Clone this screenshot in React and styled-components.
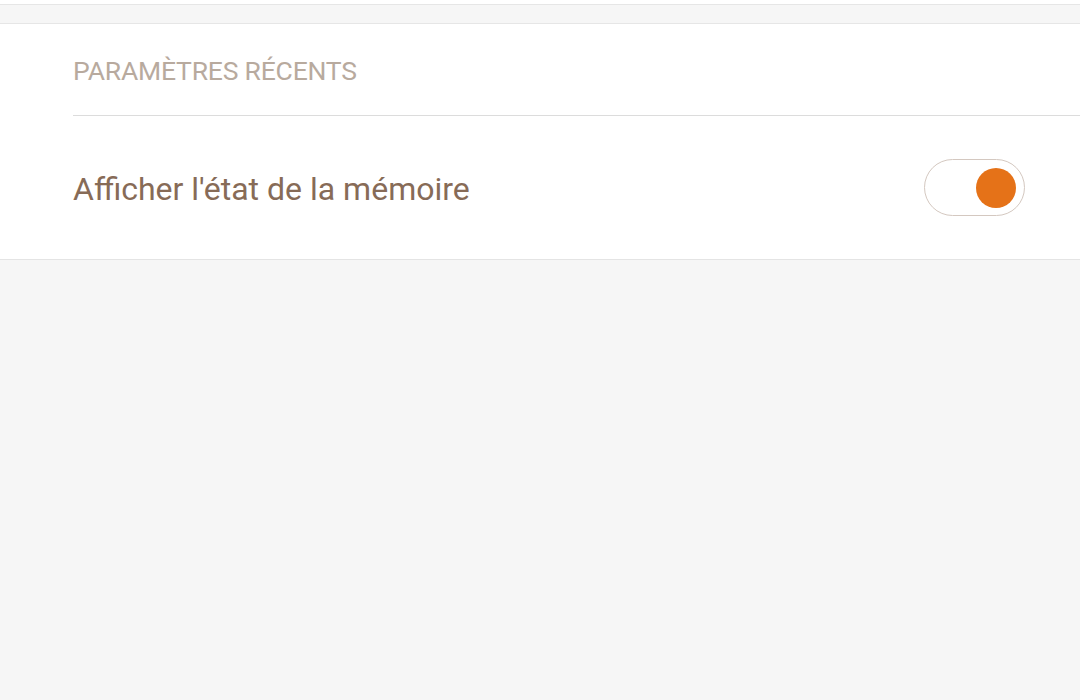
import React, { useState } from 'react';
import styled, { createGlobalStyle } from 'styled-components';

const GlobalStyle = createGlobalStyle`
	html, body {
		margin: 0;
		padding: 0;
		background: #f6f6f6;
		font-family: Roboto, "Liberation Sans", sans-serif;
	}
`;

const Page = styled.div`
	width: 1080px;
	height: 700px;
	background: #f6f6f6;
	overflow: hidden;
`;

const TopGap = styled.div`
	height: 4px;
	background: #ffffff;
	border-bottom: 1px solid #e6e6e6;
`;

const Strip = styled.div`
	height: 18px;
	background: #f6f6f6;
	border-bottom: 1px solid #e6e6e6;
`;

const Panel = styled.section`
	background: #ffffff;
	border-bottom: 1px solid #e4e4e4;
	padding-left: 73px;
`;

const SectionTitle = styled.div`
	height: 92px;
	display: flex;
	align-items: center;
	padding-top: 1px;
	box-sizing: border-box;
	border-bottom: 1px solid #dcdcdc;
	color: #b8aa9e;
	font-size: 26.5px;
	letter-spacing: -0.2px;
`;

const Row = styled.div`
	height: 143px;
	display: flex;
	align-items: center;
	justify-content: space-between;
	padding-right: 55px;
`;

const Label = styled.span`
	color: #876b57;
	font-size: 32px;
	letter-spacing: 0;
	margin-top: 2px;
`;

const Switch = styled.button`
	width: 101px;
	height: 57px;
	padding: 0 8px;
	border: 1px solid #d4c8c0;
	border-radius: 29px;
	background: #ffffff;
	display: flex;
	align-items: center;
	justify-content: ${(p) => (p.$on ? 'flex-end' : 'flex-start')};
	cursor: pointer;
	box-sizing: border-box;
`;

const Knob = styled.span`
	width: 40px;
	height: 40px;
	border-radius: 50%;
	background: ${(p) => (p.$on ? '#e57218' : '#cfc4bc')};
`;

export default function App() {
	const [memory, setMemory] = useState(true);
	return (
		<Page>
			<GlobalStyle />
			<TopGap />
			<Strip />
			<Panel>
				<SectionTitle>PARAMÈTRES RÉCENTS</SectionTitle>
				<Row>
					<Label>Afficher l'état de la mémoire</Label>
					<Switch $on={memory} onClick={() => setMemory(!memory)}>
						<Knob $on={memory} />
					</Switch>
				</Row>
			</Panel>
		</Page>
	);
}
